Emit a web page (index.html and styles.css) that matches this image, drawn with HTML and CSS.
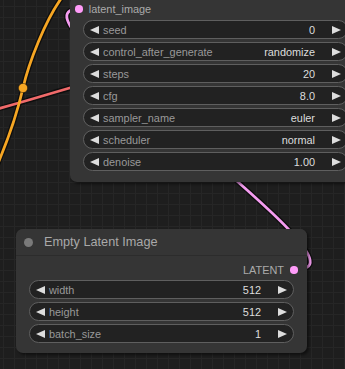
FILE: index.html
```html
<!DOCTYPE html>
<html>
<head>
<meta charset="utf-8">
<link rel="stylesheet" href="styles.css">
</head>
<body>
<div class="canvas">
  <svg class="links" width="345" height="369" viewBox="0 0 345 369">
    <g fill="none" stroke-linecap="round">
      <path class="link-border" d="M -4 168 C 8 140, 18 110, 23 88 S 45 18, 66 -8"/>
      <path class="link-border" d="M -10 111 C 20 103, 45 95, 80 85"/>
      <path class="link-border" d="M 298 269 C 383 269, -6 9, 79 9"/>
      <path stroke="#f06a6a" stroke-width="2.8" d="M -10 111 C 20 103, 45 95, 80 85"/>
      <path stroke="#f6a623" stroke-width="2.8" d="M -4 168 C 8 140, 18 110, 23 88 S 45 18, 66 -8"/>
      <path stroke="#f49cf0" stroke-width="2.8" d="M 298 269 C 383 269, -6 9, 79 9"/>
    </g>
    <circle cx="23" cy="88" r="4.6" fill="#f6a623" stroke="#000" stroke-opacity="0.4" stroke-width="1"/>
  </svg>

  <div class="node node-sampler">
    <div class="slot-row slot-in"><span class="dot dot-latent"></span><span class="slot-label">latent_image</span></div>
    <div class="widgets">
      <div class="widget"><span class="arrow arrow-l"></span><span class="w-label">seed</span><span class="w-value">0</span><span class="arrow arrow-r"></span></div>
      <div class="widget"><span class="arrow arrow-l"></span><span class="w-label">control_after_generate</span><span class="w-value">randomize</span><span class="arrow arrow-r"></span></div>
      <div class="widget"><span class="arrow arrow-l"></span><span class="w-label">steps</span><span class="w-value">20</span><span class="arrow arrow-r"></span></div>
      <div class="widget"><span class="arrow arrow-l"></span><span class="w-label">cfg</span><span class="w-value">8.0</span><span class="arrow arrow-r"></span></div>
      <div class="widget"><span class="arrow arrow-l"></span><span class="w-label">sampler_name</span><span class="w-value">euler</span><span class="arrow arrow-r"></span></div>
      <div class="widget"><span class="arrow arrow-l"></span><span class="w-label">scheduler</span><span class="w-value">normal</span><span class="arrow arrow-r"></span></div>
      <div class="widget"><span class="arrow arrow-l"></span><span class="w-label">denoise</span><span class="w-value">1.00</span><span class="arrow arrow-r"></span></div>
    </div>
  </div>

  <div class="node node-latent">
    <div class="title"><span class="title-dot"></span><span class="title-text">Empty Latent Image</span></div>
    <div class="body">
      <div class="slot-row slot-out"><span class="slot-label">LATENT</span><span class="dot dot-latent"></span></div>
      <div class="widgets">
        <div class="widget"><span class="arrow arrow-l"></span><span class="w-label">width</span><span class="w-value">512</span><span class="arrow arrow-r"></span></div>
        <div class="widget"><span class="arrow arrow-l"></span><span class="w-label">height</span><span class="w-value">512</span><span class="arrow arrow-r"></span></div>
        <div class="widget"><span class="arrow arrow-l"></span><span class="w-label">batch_size</span><span class="w-value">1</span><span class="arrow arrow-r"></span></div>
      </div>
    </div>
  </div>
</div>
</body>
</html>
```

FILE: styles.css
```css
html, body {
  margin: 0;
  padding: 0;
  background: #1f1f1f;
}

.canvas {
  position: relative;
  width: 345px;
  height: 369px;
  overflow: hidden;
  background-color: #1e1e1e;
  background-image:
    linear-gradient(#262626 1px, transparent 1px),
    linear-gradient(90deg, #262626 1px, transparent 1px);
  background-size: 11px 11px;
  background-position: 3px 6px;
  font-family: "Liberation Sans", Arial, sans-serif;
}

.links {
  position: absolute;
  left: 0;
  top: 0;
}

.link-border {
  stroke: rgba(0, 0, 0, 0.55);
  stroke-width: 5.5;
}

.node {
  position: absolute;
  width: 291px;
  background: #353535;
  border-radius: 7px;
  box-shadow: 2px 2px 3px rgba(0, 0, 0, 0.5);
  box-sizing: border-box;
}

.node-sampler {
  left: 70px;
  top: -4px;
  height: 186px;
  padding: 4px 13px 0 13px;
}

.node-latent {
  left: 16px;
  top: 229px;
  height: 124px;
  display: flex;
  flex-direction: column;
}

.title {
  height: 27px;
  display: flex;
  align-items: center;
  background: #353535;
  border-radius: 7px 7px 0 0;
  border-bottom: 1px solid #2c2c2c;
  box-sizing: border-box;
  padding-left: 8px;
}

.title-dot {
  width: 9px;
  height: 9px;
  border-radius: 50%;
  background: #7a7a7a;
  margin-right: 11px;
}

.title-text {
  color: #a9a9a9;
  font-size: 12.7px;
}

.body {
  padding: 5px 13px 0 13px;
}

.slot-row {
  height: 18px;
  display: flex;
  align-items: center;
  font-size: 10.9px;
  color: #aaaaaa;
}

.slot-in {
  margin-left: -8px;
}

.slot-out {
  justify-content: flex-end;
  margin-right: -9px;
}

.dot {
  width: 7.5px;
  height: 7.5px;
  border-radius: 50%;
  flex: none;
}

.dot-latent {
  background: #ff9cf9;
}

.slot-in .dot {
  margin-right: 6px;
  margin-left: 0.3px;
}

.slot-out .dot {
  margin-left: 6px;
  margin-right: 5.5px;
}

.widgets {
  display: flex;
  flex-direction: column;
  gap: 3px;
  margin-top: 2px;
  width: 265px;
}

.node-latent .widgets {
  margin-top: 1px;
}

.widget {
  height: 19px;
  box-sizing: border-box;
  border: 1px solid #5f5f5f;
  border-radius: 10px;
  background: #222222;
  display: flex;
  align-items: center;
  padding: 0 6px;
  font-size: 10.9px;
}

.arrow {
  width: 0;
  height: 0;
  border-top: 4.5px solid transparent;
  border-bottom: 4.5px solid transparent;
  flex: none;
}

.arrow-l {
  border-right: 9px solid #dddddd;
}

.arrow-r {
  border-left: 9px solid #dddddd;
}

.w-label {
  flex: 1;
  color: #999999;
  margin-left: 4px;
  white-space: nowrap;
}

.w-value {
  color: #dddddd;
  margin-right: 17px;
  white-space: nowrap;
}
```
